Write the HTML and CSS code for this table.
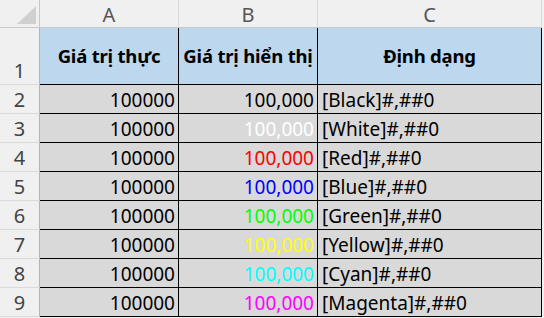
FILE: index.html
```html
<!DOCTYPE html>
<html lang="vi">
<head>
<meta charset="utf-8">
<link rel="stylesheet" href="styles.css">
</head>
<body>
<div class="sheet">
  <div class="corner"><svg width="22" height="20" viewBox="0 0 22 20"><polygon points="21,1 21,19 2,19" fill="#d0d0d0"/></svg></div>
  <div class="colhead">A</div>
  <div class="colhead">B</div>
  <div class="colhead">C</div>

  <div class="rowhead">1</div>
  <div class="cell title">Giá trị thực</div>
  <div class="cell title">Giá trị hiển thị</div>
  <div class="cell title">Định dạng</div>

  <div class="rowhead">2</div>
  <div class="cell num">100000</div>
  <div class="cell num c-black">100,000</div>
  <div class="cell text">[Black]#,##0</div>

  <div class="rowhead">3</div>
  <div class="cell num">100000</div>
  <div class="cell num c-white">100,000</div>
  <div class="cell text">[White]#,##0</div>

  <div class="rowhead">4</div>
  <div class="cell num">100000</div>
  <div class="cell num c-red">100,000</div>
  <div class="cell text">[Red]#,##0</div>

  <div class="rowhead">5</div>
  <div class="cell num">100000</div>
  <div class="cell num c-blue">100,000</div>
  <div class="cell text">[Blue]#,##0</div>

  <div class="rowhead">6</div>
  <div class="cell num">100000</div>
  <div class="cell num c-green">100,000</div>
  <div class="cell text">[Green]#,##0</div>

  <div class="rowhead">7</div>
  <div class="cell num">100000</div>
  <div class="cell num c-yellow">100,000</div>
  <div class="cell text">[Yellow]#,##0</div>

  <div class="rowhead">8</div>
  <div class="cell num">100000</div>
  <div class="cell num c-cyan">100,000</div>
  <div class="cell text">[Cyan]#,##0</div>

  <div class="rowhead">9</div>
  <div class="cell num">100000</div>
  <div class="cell num c-magenta">100,000</div>
  <div class="cell text">[Magenta]#,##0</div>
</div>
</body>
</html>
```
FILE: styles.css
```css
* { box-sizing: border-box; }
html, body { margin: 0; padding: 0; }
body {
  background: #f0f0f0;
  font-family: "Noto Sans", "Open Sans", sans-serif;
  width: 544px;
  height: 318px;
  overflow: hidden;
}
.sheet {
  display: grid;
  grid-template-columns: 40px 139px 139px 224px;
  grid-template-rows: 28px 57px repeat(8, 29px);
  background: #f0f0f0;
}
.corner {
  background: #f0f0f0;
  border-right: 1px solid #c8c8c8;
  border-bottom: 1px solid #c8c8c8;
  display: flex;
  align-items: flex-end;
  justify-content: flex-end;
  padding: 0 2px 2px 0;
}
.corner svg { display: block; }
.colhead {
  background: #f0f0f0;
  border-right: 1px solid #d8d8d8;
  border-bottom: 1px solid #c8c8c8;
  color: #555;
  font-size: 20px;
  line-height: 26px;
  text-align: center;
  padding-top: 2px;
}
.rowhead {
  background: #f0f0f0;
  border-right: 1px solid #b4b4b4;
  border-bottom: 1px solid #dadada;
  color: #444;
  font-size: 20px;
  line-height: 26px;
  display: flex;
  align-items: flex-end;
  justify-content: center;
}
.cell {
  border-right: 1px solid #000;
  border-bottom: 1px solid #000;
  background: #d9d9d9;
  color: #000;
  font-size: 19px;
  line-height: 26px;
  display: flex;
  align-items: flex-end;
  white-space: nowrap;
  overflow: hidden;
}
.cell.title {
  background: #bdd7ee;
  font-weight: bold;
  align-items: center;
  justify-content: center;
  font-size: 18.5px;
  letter-spacing: -0.2px;
}
.cell.num { justify-content: flex-end; padding-right: 3px; }
.cell.text { justify-content: flex-start; padding-left: 4px; }
.c-black { color: #000; }
.c-white { color: #fff; }
.c-red { color: #ff0000; }
.c-blue { color: #0000ff; }
.c-green { color: #00ff00; }
.c-yellow { color: #ffff00; }
.c-cyan { color: #00ffff; }
.c-magenta { color: #ff00ff; }
```
